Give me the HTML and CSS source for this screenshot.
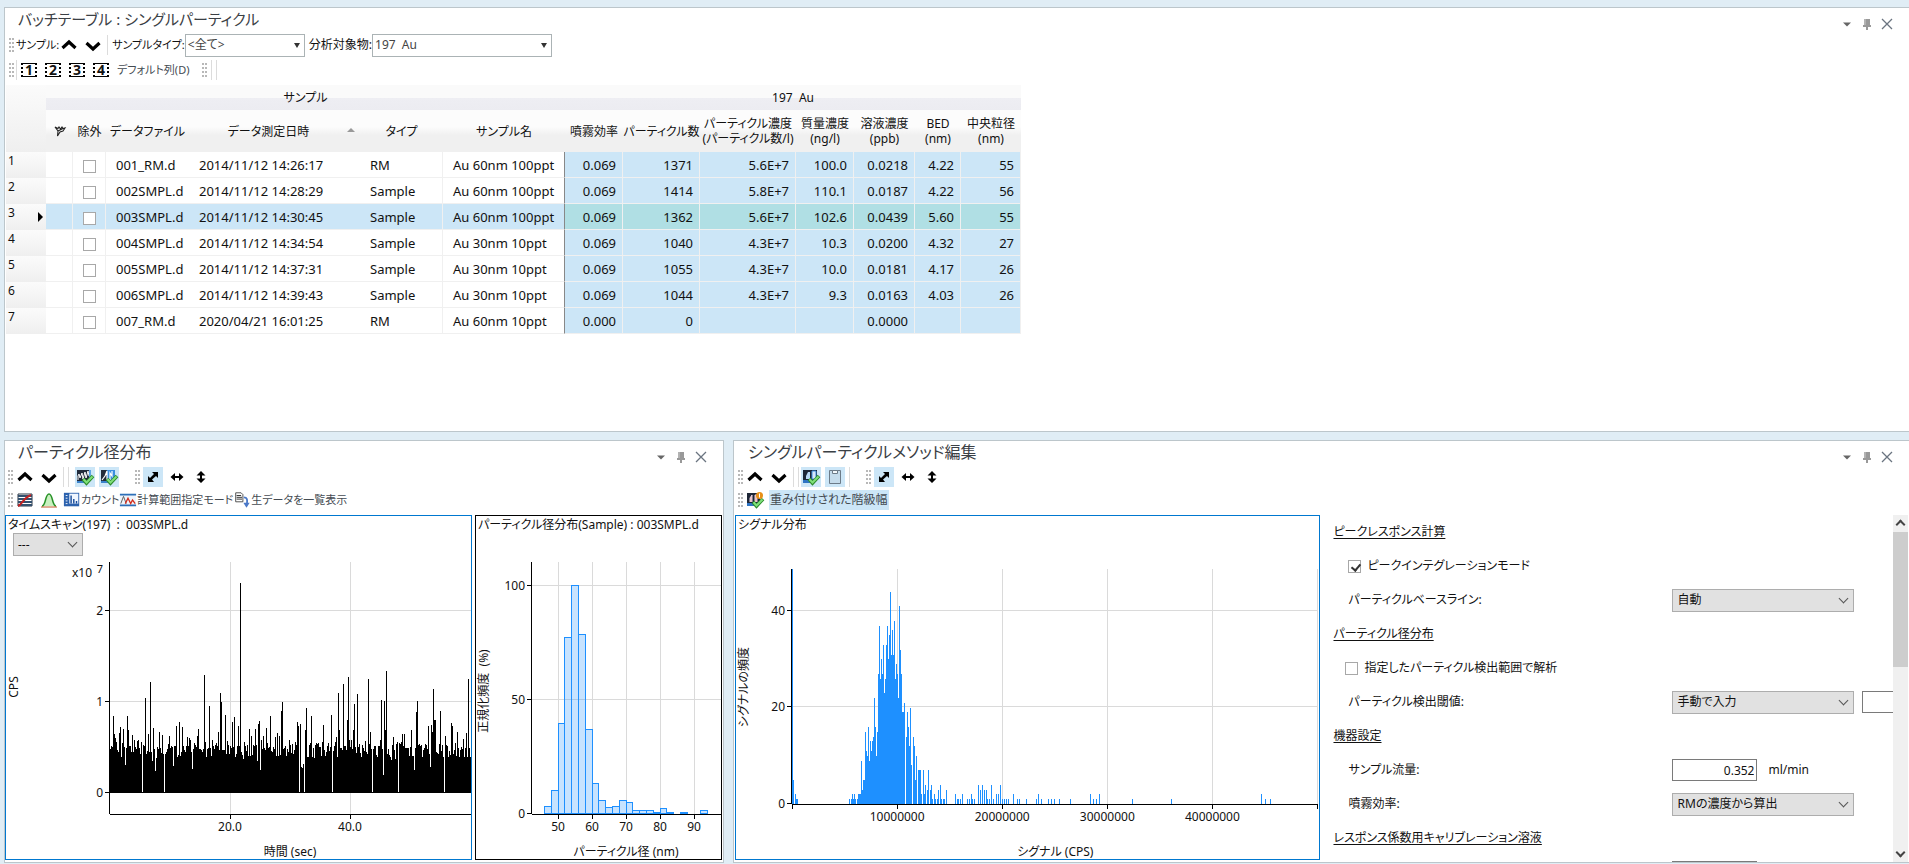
FILE: index.html
```html
<!DOCTYPE html>
<html lang="ja">
<head>
<meta charset="utf-8">
<title>シングルパーティクル</title>
<link rel="stylesheet" href="styles.css">
</head>
<body>
<svg class="sprite" aria-hidden="true">
  <symbol id="up" viewBox="0 0 20 20"><path d="M3.500 13L10 7l6.500 6" fill="none" stroke="#000" stroke-width="3.200"/></symbol>
  <symbol id="down" viewBox="0 0 20 20"><path d="M3.500 8l6.500 6L16.500 8" fill="none" stroke="#000" stroke-width="3.200"/></symbol>
  <symbol id="caret" viewBox="0 0 20 20"><path d="M6 8.500h8l-4 4z" fill="#666"/></symbol>
  <symbol id="pin" viewBox="0 0 20 20"><path d="M7 5h6v6h1v2H6v-2h1zM9 13h2v3H9z" fill="#999"/><path d="M8 5v6" stroke="#ccc"/></symbol>
  <symbol id="close" viewBox="0 0 20 20"><path d="M5 5l10 10M15 5L5 15" stroke="#6a7480" stroke-width="1.300"/></symbol>
  <symbol id="diag" viewBox="0 0 20 20"><path d="M9 5h6v6l-2-2-4 3.500 2 2.500H5V9l2 2 4-4z" fill="#000"/></symbol>
  <symbol id="horiz" viewBox="0 0 20 20"><path d="M3.500 10l4.500-4v3h4V6l4.500 4-4.500 4v-3H8v3z" fill="#000"/></symbol>
  <symbol id="vert" viewBox="0 0 20 20"><path d="M10 4l4.500 4.500H11v3h3.500L10 16l-4.500-4.500H9v-3H5.500z" fill="#000"/></symbol>
  <symbol id="check" viewBox="0 0 20 20"><path d="M8 12l3.500 4L18 9" fill="none" stroke="#2c8a2c" stroke-width="3.600"/><path d="M8.500 12.300l3 3.200L17.500 9.500" fill="none" stroke="#7fe07a" stroke-width="2"/></symbol>
  <symbol id="scan" viewBox="0 0 20 20"><path d="M2 3h14v11H2z" fill="#222c3c"/><path d="M2 14h9v2H2z" fill="#3c84cc"/><path d="M3 13V9l1-2 1 4 2-5 1 6 2-7 1 6 2-7 1 5" fill="none" stroke="#fff"/><path d="M14 3h2v11h-2z" fill="#5fa5e2"/><use href="#check"/></symbol>
  <symbol id="scan2" viewBox="0 0 20 20"><path d="M2 3h14v11H2z" fill="#222c3c"/><path d="M8 3h8v11H8z" fill="#3b8fe0"/><path d="M2 14h9v2H2z" fill="#3c84cc"/><path d="M3 13l3-4 2-5v9M11 13V6l2 3V4" fill="none" stroke="#fff" stroke-width="1.200"/><use href="#check"/></symbol>
  <symbol id="signal" viewBox="0 0 20 20"><path d="M2 3h14v11H2z" fill="#1d2636"/><path d="M2 13h9v3H2z" fill="#2e74c4"/><path d="M11 4h4v8h-4z" fill="#d9e8f8" stroke="#3b8fe0"/><path d="M5 12V9l2-4h2v7" fill="#b9d8f4"/><use href="#check"/></symbol>
  <symbol id="signal2" viewBox="0 0 20 20"><path d="M2 3h13v11H2z" fill="#1d2636"/><path d="M2 13h9v3H2z" fill="#2e74c4"/><path d="M5 12V8l2-3v7M10 12V5h2v7" fill="#f3b8ae" stroke="#e8d0e0"/><use href="#check"/><circle cx="14.500" cy="5.500" r="3.500" fill="#e89018"/><path d="M14.500 3.500v4" stroke="#fff"/></symbol>
  <symbol id="sheet" viewBox="0 0 20 20"><path d="M4.500 3.500h11v13h-11z" fill="#c5dcec" stroke="#6c7b88"/><path d="M7.500 3.500h5v3h-5z" fill="#f4f9fc" stroke="#6c7b88"/></symbol>
  <symbol id="calib" viewBox="0 0 20 20"><path d="M3 4h14v12H3z" fill="#fff" stroke="#2d3745"/><path d="M3 6h14M3 9h14M3 12h14M3 15h14" stroke="#33506e" stroke-width="2"/><path d="M3 16c4-1 5-8 13-11" fill="none" stroke="#c32020" stroke-width="2"/></symbol>
  <symbol id="peak" viewBox="0 0 20 20"><path d="M3 16c4 0 3-12 7-12s3 12 7 12" fill="#c9f0bf" stroke="#279227" stroke-width="1.500"/><path d="M2 17h16" stroke="#c05828"/></symbol>
  <symbol id="count" viewBox="0 0 20 20"><path d="M1 2h17v15H1z" fill="#2c62ae"/><path d="M7 3h10v11H7z" fill="#f0f6ff"/><path d="M9 14V5M12 14V9M15 14v-3" stroke="#174b9a" stroke-width="1.600"/><path d="M3 5h2M3 8h2M3 11h2M3 14h2" stroke="#fff"/></symbol>
  <symbol id="range" viewBox="0 0 20 20"><path d="M1 3h18v14H1z" fill="#eef4fb"/><path d="M1 4h18M1 16h18" stroke="#2d6fb8" stroke-width="2"/><path d="M2 14l3-8 3 8" fill="none" stroke="#555"/><path d="M7 14l3-6 3 6 2-4 3 4" fill="none" stroke="#d32b1a" stroke-width="1.400"/></symbol>
  <symbol id="export" viewBox="0 0 20 20"><path d="M3 2h6l2 2v8H3z" fill="#fff" stroke="#444"/><path d="M4 5h5M4 7h6M4 9h6" stroke="#222"/><path d="M12 7c4 0 4 3 3.500 7" fill="none" stroke="#4a78c8" stroke-width="2"/><path d="M11.500 13h7L15 18.500z" fill="#4a78c8"/></symbol>
  <symbol id="flag" viewBox="0 0 14 14"><path d="M2 3l3 4-.5 5L7 8l3-1 2-3-2 .5L9 3 7.500 5 6 3 5 4.500zM5 7l5-2.500" fill="none" stroke="#222" stroke-width="1.100"/></symbol>
</svg>

<section class="panel batch">
  <header class="panel-head">
    <h1>バッチテーブル : シングルパーティクル</h1>
    <div class="window-tools"><button aria-label="メニュー"><svg><use href="#caret"/></svg></button><button aria-label="固定"><svg><use href="#pin"/></svg></button><button aria-label="閉じる"><svg><use href="#close"/></svg></button></div>
  </header>
  <div class="bar">
    <i class="grip"></i><span>サンプル:</span>
    <button class="tool" aria-label="前のサンプル"><svg><use href="#up"/></svg></button>
    <button class="tool" aria-label="次のサンプル"><svg><use href="#down"/></svg></button>
    <i class="rule"></i>
    <label for="stype">サンプルタイプ:</label>
    <span class="flat stype"><select id="stype"><option>&lt;全て&gt;</option></select></span>
    <label class="wide" for="analyte">分析対象物:</label>
    <span class="flat analyte"><select id="analyte"><option>197&nbsp; Au</option></select></span>
  </div>
  <div class="bar bar-columns">
    <i class="grip"></i><i class="rule"></i>
    <button class="num">1</button><button class="num">2</button><button class="num">3</button><button class="num">4</button>
    <button class="text">デフォルト列(D)</button>
    <i class="grip far"></i><i class="rule"></i><i class="rule"></i>
  </div>
  <table>
    <colgroup><col class="w-row"><col class="w-flag"><col class="w-ex"><col class="w-file"><col class="w-date"><col class="w-type"><col class="w-name"><col class="w-eff"><col class="w-num"><col class="w-pc"><col class="w-mass"><col class="w-sol"><col class="w-bed"><col class="w-size"></colgroup>
    <thead>
      <tr class="group"><th rowspan="2"></th><th colspan="6">サンプル</th><th colspan="7">197&nbsp; Au</th></tr>
      <tr class="cols"><th><svg class="flag" role="img" aria-label="フラグ"><use href="#flag"/></svg></th><th>除外</th><th>データファイル</th><th class="sorted">データ測定日時</th><th>タイプ</th><th>サンプル名</th><th>噴霧効率</th><th>パーティクル数</th><th>パーティクル濃度<br>(パーティクル数/l)</th><th>質量濃度<br>(ng/l)</th><th>溶液濃度<br>(ppb)</th><th>BED<br>(nm)</th><th>中央粒径<br>(nm)</th></tr>
    </thead>
    <tbody id="rows"></tbody>
  </table>
</section>

<main class="lower">
  <section class="panel">
    <header class="panel-head">
      <h2>パーティクル径分布</h2>
      <div class="window-tools"><button aria-label="メニュー"><svg><use href="#caret"/></svg></button><button aria-label="固定"><svg><use href="#pin"/></svg></button><button aria-label="閉じる"><svg><use href="#close"/></svg></button></div>
    </header>
    <div class="bar tools">
      <i class="grip"></i>
      <button class="tool" aria-label="上へ"><svg><use href="#up"/></svg></button>
      <button class="tool" aria-label="下へ"><svg><use href="#down"/></svg></button>
      <i class="rule"></i><i class="rule"></i>
      <button class="tool on" aria-label="タイムスキャン"><svg><use href="#scan"/></svg></button>
      <button class="tool on" aria-label="径分布"><svg><use href="#scan2"/></svg></button>
      <i class="grip near"></i>
      <button class="tool on" aria-label="両方向"><svg><use href="#diag"/></svg></button>
      <button class="tool" aria-label="横方向"><svg><use href="#horiz"/></svg></button>
      <button class="tool" aria-label="縦方向"><svg><use href="#vert"/></svg></button>
    </div>
    <div class="bar tools second">
      <i class="grip"></i>
      <button class="tool" aria-label="検量線"><svg><use href="#calib"/></svg></button>
      <button class="tool" aria-label="ピーク"><svg><use href="#peak"/></svg></button>
      <button class="text"><svg><use href="#count"/></svg>カウント</button>
      <button class="text"><svg><use href="#range"/></svg>計算範囲指定モード</button>
      <button class="text"><svg><use href="#export"/></svg>生データを一覧表示</button>
    </div>
    <div class="charts">
      <figure class="chart active">
        <figcaption>タイムスキャン(197)&nbsp; :&nbsp; 003SMPL.d</figcaption>
        <span class="combo small"><select aria-label="表示対象"><option>---</option></select></span>
        <svg viewBox="6 556 465 302" id="scan-chart" preserveAspectRatio="xMinYMin">
          <path class="grid" d="M230.500 562v252M350.500 562v252M110 610.500h361M110 701.500h361"/>
          <path class="bars-black" id="scan-bars"/>
          <path class="axis" d="M109.500 562v252M110 814.500h361M105 610.500h4M105 701.500h4M105 792.500h4M110 792.500h361M230.500 815v4M350.500 815v4"/>
          <g class="ticks end"><text x="92" y="577">x10</text><text x="103" y="573" class="exp">7</text><text x="103" y="615">2</text><text x="103" y="706">1</text><text x="103" y="797">0</text></g>
          <g class="ticks mid"><text x="230" y="831">20.0</text><text x="350" y="831">40.0</text><text x="290" y="856">時間&#160;(sec)</text><text transform="translate(18 687) rotate(-90)">CPS</text></g>
        </svg>
      </figure>
      <figure class="chart">
        <figcaption>パーティクル径分布(Sample) : 003SMPL.d</figcaption>
        <svg viewBox="476 533 245 325" preserveAspectRatio="xMinYMin">
          <path class="grid" d="M558.500 562v252M592.500 562v252M626.500 562v252M660.500 562v252M694.500 562v252M532 585.500h189M532 699.500h189"/>
          <g id="size-bars" class="size-bars"></g>
          <path class="axis" d="M531.500 562v252M532 814.500h189M527 585.500h4M527 699.500h4M527 813.500h4M558.500 815v4M592.500 815v4M626.500 815v4M660.500 815v4M694.500 815v4"/>
          <g class="ticks end"><text x="525" y="590">100</text><text x="525" y="704">50</text><text x="525" y="818">0</text></g>
          <g class="ticks mid"><text x="558" y="831">50</text><text x="592" y="831">60</text><text x="626" y="831">70</text><text x="660" y="831">80</text><text x="694" y="831">90</text><text x="626" y="856">パーティクル径&#160;(nm)</text><text transform="translate(488 691) rotate(-90)">正規化頻度&#160;&#160;(%)</text></g>
        </svg>
      </figure>
    </div>
  </section>

  <section class="panel method">
    <header class="panel-head">
      <h2>シングルパーティクルメソッド編集</h2>
      <div class="window-tools"><button aria-label="メニュー"><svg><use href="#caret"/></svg></button><button aria-label="固定"><svg><use href="#pin"/></svg></button><button aria-label="閉じる"><svg><use href="#close"/></svg></button></div>
    </header>
    <div class="bar tools">
      <i class="grip"></i>
      <button class="tool" aria-label="上へ"><svg><use href="#up"/></svg></button>
      <button class="tool" aria-label="下へ"><svg><use href="#down"/></svg></button>
      <i class="rule"></i><i class="rule"></i>
      <button class="tool on" aria-label="シグナル分布"><svg><use href="#signal"/></svg></button>
      <button class="tool on" aria-label="メソッド"><svg><use href="#sheet"/></svg></button>
      <i class="rule"></i><i class="grip near"></i>
      <button class="tool on" aria-label="両方向"><svg><use href="#diag"/></svg></button>
      <button class="tool" aria-label="横方向"><svg><use href="#horiz"/></svg></button>
      <button class="tool" aria-label="縦方向"><svg><use href="#vert"/></svg></button>
    </div>
    <div class="bar tools second">
      <i class="grip"></i>
      <button class="tool" aria-label="階級幅の設定"><svg><use href="#signal2"/></svg></button>
      <button class="text on">重み付けされた階級幅</button>
    </div>
    <div class="editor">
      <figure class="chart active">
        <figcaption>シグナル分布</figcaption>
        <svg viewBox="736 533 583 325" preserveAspectRatio="xMinYMin">
          <path class="grid" d="M897.500 569v235M1002.500 569v235M1107.500 569v235M1212.500 569v235M1317.500 569v235M793 610.500h525M793 706.500h525"/>
          <path class="bars-blue" id="signal-bars"/>
          <path class="axis" d="M791.500 569v235M792 804.500h526M787 610.500h4M787 706.500h4M787 803.500h4M792.500 805v4M897.500 805v4M1002.500 805v4M1107.500 805v4M1212.500 805v4M1317.500 805v4"/>
          <g class="ticks end"><text x="785" y="615">40</text><text x="785" y="711">20</text><text x="785" y="808">0</text></g>
          <g class="ticks mid"><text x="897" y="821">10000000</text><text x="1002" y="821">20000000</text><text x="1107" y="821">30000000</text><text x="1212" y="821">40000000</text><text x="1055" y="856">シグナル&#160;(CPS)</text><text transform="translate(748 687) rotate(-90)">シグナルの頻度</text></g>
        </svg>
      </figure>
      <div class="settings">
        <form>
          <h3>ピークレスポンス計算</h3>
          <div class="row"><label class="tick"><input type="checkbox" checked>ピークインテグレーションモード</label></div>
          <div class="row"><label for="base">パーティクルベースライン:</label><span class="combo"><select id="base"><option>自動</option></select></span></div>
          <h3>パーティクル径分布</h3>
          <div class="row outdent"><label class="tick"><input type="checkbox">指定したパーティクル検出範囲で解析</label></div>
          <div class="row"><label for="thr">パーティクル検出閾値:</label><span class="combo"><select id="thr"><option>手動で入力</option></select></span><input class="value" type="text" aria-label="検出閾値"></div>
          <h3>機器設定</h3>
          <div class="row"><label for="flow">サンプル流量:</label><input class="value" id="flow" type="text" value="0.352"><span class="unit">ml/min</span></div>
          <div class="row"><label for="neb">噴霧効率:</label><span class="combo"><select id="neb"><option>RMの濃度から算出</option></select></span></div>
          <h3>レスポンス係数用キャリブレーション溶液</h3>
          <div class="row"><span></span><input class="value" type="text" aria-label="溶液濃度"></div>
        </form>
        <div class="scroll"><button aria-label="上へスクロール" class="s-up"></button><div class="thumb"></div><button aria-label="下へスクロール" class="s-down"></button></div>
      </div>
    </div>
  </section>
</main>
<script src="app.js"></script>
</body>
</html>
```

FILE: styles.css
```css
* { box-sizing: border-box; }
body {
  margin: 0;
  height: 100vh;
  padding: 7px 0 1px 4px;
  display: flex;
  flex-direction: column;
  gap: 8px;
  overflow: hidden;
  background: #e0edf5;
  color: #111;
  font: 12px/16px "Noto Sans", "Noto Sans CJK JP", sans-serif;
  font-feature-settings: "palt";
}
button, select, input { font: inherit; font-feature-settings: inherit; color: inherit; }
button { border: 0; padding: 0; background: none; }
h1, h2, h3, figure { margin: 0; font-weight: 400; }
.sprite { position: absolute; width: 0; height: 0; }

.panel {
  flex: 1 1 0;
  min-width: 0;
  min-height: 0;
  display: flex;
  flex-direction: column;
  background: #fff;
  border: 1px solid #bcc6cb;
  overflow: hidden;
}
.batch { border-right: 0; }
.panel-head { display: flex; justify-content: space-between; height: 24px; padding-left: 13px; flex: none; }
.panel-head h1, .panel-head h2 { font-size: 16px; line-height: 22px; color: #3b4045; white-space: nowrap; }
.panel-head h1 { font-size: 15px; }
.window-tools { display: flex; align-items: center; padding: 8px 12px 0 0; }
.window-tools svg { width: 20px; height: 20px; display: block; }

.bar { display: flex; align-items: center; height: 26px; padding-left: 3px; flex: none; white-space: nowrap; font-size: 11px; }
.bar select, .wide { font-size: 12px; }
.grip {
  width: 6px;
  height: 14px;
  margin-right: 2px;
  background: conic-gradient(from 0deg at 1px 50%, #b8b8b8 25%, #fff 0) 0 0 / 3px 4px;
}
.rule { width: 1px; height: 20px; background: #dcdcdc; margin-right: 4px; }
.tool { width: 20px; height: 20px; margin-right: 4px; }
.tool svg { width: 20px; height: 20px; display: block; }
.text svg { width: 18px; height: 18px; display: block; }
.on { background: #cce6f7; }
.text { display: flex; align-items: center; height: 20px; color: #444b52; }
.flat { position: relative; height: 23px; margin: 0 4px 0 0; }
.flat select, .combo select { appearance: none; width: 100%; height: 100%; border: 1px solid #abb3b5; border-radius: 0; padding: 0 4px; outline: 0; }
.flat select { background: #fff; color: #444; padding: 0 2px; }
.flat::after { content: ""; position: absolute; right: 5px; top: 9px; border: 3px solid transparent; border-top: 5px solid #333; border-bottom: 0; }
.stype { width: 120px; }
.analyte { width: 180px; }
.bar-columns { height: 24px; }
.num {
  width: 16px;
  height: 14px;
  margin-right: 8px;
  border: 1px solid #000;
  border-left: 2px dotted #000;
  border-right: 2px dotted #000;
  font-size: 14px;
  line-height: 12px;
  font-weight: 700;
}
.num:last-of-type { margin-right: 4px; }
.far { margin: 0 4px 0 12px; }

table { width: 1015px; margin: 3px 0 0 1px; border-collapse: separate; border-spacing: 0; table-layout: fixed; }
th, td { padding: 0; font-weight: 400; white-space: nowrap; }
.w-row { width: 40px; } .w-flag { width: 27px; } .w-ex { width: 33px; } .w-file { width: 83px; }
.w-date { width: 171px; } .w-type { width: 83px; } .w-name { width: 122px; } .w-eff { width: 58px; }
.w-num { width: 77px; } .w-pc { width: 96px; } .w-mass { width: 58px; } .w-sol { width: 61px; }
.w-bed { width: 46px; } .w-size { width: 60px; }
.group th { height: 25px; background: linear-gradient(#fafafa 50%, #eeeef3 51%, #ececf1); }
.group th:first-child { background: linear-gradient(#fbfbfb, #efefef); }
.cols th { height: 42px; line-height: 15px; background: linear-gradient(#fcfcfc 40%, #f0f0f0 60%); }
.flag { width: 14px; height: 14px; display: block; margin: auto; }
.sorted { position: relative; padding-right: 12px; }
.sorted::after { content: ""; position: absolute; right: 5px; top: 18px; border: 4px solid transparent; border-bottom: 4px solid #999; border-top: 0; }
tbody th { position: relative; height: 26px; padding: 1px 0 0 2px; text-align: left; vertical-align: top; background: linear-gradient(#fbfbfb, #efefef); }
tbody td { height: 26px; font-size: 13px; padding: 0 0 0 10px; border-bottom: 1px solid #f0f0f0; color: #111; }
tbody td:nth-child(2), tbody td:nth-child(3), tbody td:nth-child(6) { border-right: 1px solid #f0f0f0; }
tbody td:nth-child(3) { padding: 0; text-align: center; }
tbody td:nth-child(7) { border-right: 1px solid #888; }
tbody td.v { text-align: right; padding: 0 6px 0 0; background: #cce6f7; border-right: 1px solid #f0f0f0; }
.current td { background: #cce6f7; }
.current td.v { background: #b0dfe4; }
.current th::after { content: ""; position: absolute; right: 3px; top: 8px; border: 5px solid transparent; border-left-color: #000; border-right: 0; }
input[type="checkbox"] { appearance: none; width: 13px; height: 13px; margin: 0; border: 1px solid #a8a8a8; background: #fff; vertical-align: middle; }

.lower { flex: 1 1 0; min-height: 0; display: grid; grid-template-columns: 720fr 1176fr; gap: 9px; }
.method { border-right: 0; padding-left: 1px; }
.lower .bar { height: 24px; padding-left: 2px; }
.lower .bar.second { height: 22px; margin-bottom: 4px; }
.lower .rule + .rule { margin-right: 6px; }
.method .rule + .rule { margin-right: 2px; }
.near { margin: 0 3px 0 11px; }
.second .text.on { padding: 0 1px; font-size: 12px; }
.charts { flex: 1; min-height: 0; display: grid; grid-template-columns: 467fr 247fr; gap: 3px; padding: 0 1px 2px 0; }
.chart { min-width: 0; min-height: 0; display: flex; flex-direction: column; border: 1px solid #000; overflow: hidden; }
.chart.active { border-color: #0078d0; }
figcaption { height: 17px; line-height: 18px; padding-left: 2px; white-space: nowrap; flex: none; }
.chart > svg { flex: 1; min-height: 0; width: 100%; }
.combo { position: relative; display: block; width: 182px; height: 23px; }
.combo select { background: #e1e1e1; border-color: #adadad; }
.combo::after { content: ""; position: absolute; right: 7px; top: 6px; width: 6px; height: 6px; border: solid #555; border-width: 0 1px 1px 0; transform: rotate(45deg); }
.combo.small { width: 70px; margin-left: 7px; flex: none; }
.grid { stroke: #dadada; fill: none; shape-rendering: crispEdges; }
.axis { stroke: #000; fill: none; shape-rendering: crispEdges; }
.bars-black { stroke: #000; shape-rendering: crispEdges; }
.bars-blue { stroke: #1e90ff; shape-rendering: crispEdges; }
.size-bars { fill: #1e90ff; fill-opacity: .25; stroke: #1e90ff; shape-rendering: crispEdges; }
.ticks { font-size: 12px; fill: #111; }
.end { text-anchor: end; }
.mid { text-anchor: middle; }
.exp { font-size: 11px; }

.editor { flex: 1; min-height: 0; display: grid; grid-template-columns: 585fr 588fr; padding: 0; }
.editor .chart { margin-bottom: 2px; }
.settings { display: flex; min-height: 0; overflow: hidden; padding-right: 1px; }
form { flex: 1; min-width: 0; overflow: hidden; padding-left: 13px; }
form h3 { font-size: 12px; line-height: 34px; height: 34px; text-decoration: underline; text-underline-offset: 2px; }
.row { display: flex; align-items: center; height: 34px; padding-left: 15px; }
.row > label, .row > span:empty { flex: 0 0 324px; }
.outdent { padding-left: 12px; }
.tick { display: flex; align-items: center; gap: 6px; }
.tick input { position: relative; }
.tick input:checked::after { content: ""; position: absolute; left: 4px; top: 1px; width: 4px; height: 7px; border: solid #333; border-width: 0 2px 2px 0; transform: rotate(40deg); }
.row .combo { flex: none; }
.value { width: 85px; height: 22px; flex: none; border: 1px solid #7a7a7a; padding: 0 2px; text-align: right; }
.combo + .value { margin-left: 8px; }
.unit { padding-left: 11px; }
.scroll { width: 15px; background: #f0f0f0; display: flex; flex-direction: column; }
.scroll button { height: 17px; display: grid; place-items: center; }
.scroll button::before { content: ""; width: 5px; height: 5px; border: solid #444; border-width: 2px 0 0 2px; transform: translateY(1px) rotate(45deg); }
.scroll .s-down { margin-top: auto; }
.scroll .s-down::before { transform: translateY(-1px) rotate(225deg); }
.thumb { flex: 0 0 39%; background: #cdcdcd; }
```

FILE: app.js
```js
const samples = [
  ["001_RM.d", "2014/11/12 14:26:17", "RM", "Au 60nm 100ppt", "0.069", "1371", "5.6E+7", "100.0", "0.0218", "4.22", "55"],
  ["002SMPL.d", "2014/11/12 14:28:29", "Sample", "Au 60nm 100ppt", "0.069", "1414", "5.8E+7", "110.1", "0.0187", "4.22", "56"],
  ["003SMPL.d", "2014/11/12 14:30:45", "Sample", "Au 60nm 100ppt", "0.069", "1362", "5.6E+7", "102.6", "0.0439", "5.60", "55"],
  ["004SMPL.d", "2014/11/12 14:34:54", "Sample", "Au 30nm 10ppt", "0.069", "1040", "4.3E+7", "10.3", "0.0200", "4.32", "27"],
  ["005SMPL.d", "2014/11/12 14:37:31", "Sample", "Au 30nm 10ppt", "0.069", "1055", "4.3E+7", "10.0", "0.0181", "4.17", "26"],
  ["006SMPL.d", "2014/11/12 14:39:43", "Sample", "Au 30nm 10ppt", "0.069", "1044", "4.3E+7", "9.3", "0.0163", "4.03", "26"],
  ["007_RM.d", "2020/04/21 16:01:25", "RM", "Au 60nm 10ppt", "0.000", "0", "", "", "0.0000", "", ""]
];
document.getElementById("rows").innerHTML = samples.map((s, i) =>
  `<tr${i === 2 ? ' class="current"' : ""}><th scope="row">${i + 1}</th><td></td>` +
  `<td><input type="checkbox" aria-label="${s[0]} を除外"></td>` +
  s.map((v, j) => `<td${j > 3 ? ' class="v"' : ""}>${v}</td>`).join("") + "</tr>").join("");

// Time scan: one reading per plotted column, in 1e5 CPS. Named readings override the background.
const peaks = {
  0: 47, 3: 83, 4: 64, 5: 59, 9: 65, 10: 71, 13: 69, 17: 83, 18: 68, 22: 63, 35: 103, 38: 64, 40: 121, 43: 70, 49: 66, 52: 63,
  59: 62, 66: 72, 69: 77, 72: 71, 79: 59, 88: 69, 94: 129, 99: 95, 108: 66, 110: 109, 111: 99, 115: 85, 122: 77, 124: 82, 128: 73,
  130: 230, 139: 69, 141: 61, 145: 69, 148: 75, 149: 78, 153: 62, 156: 70, 160: 83, 167: 65, 169: 62, 171: 89, 172: 99, 187: 77,
  188: 73, 190: 75, 195: 68, 196: 92, 201: 84, 213: 74, 221: 85, 228: 109, 229: 68, 233: 119, 237: 79, 238: 126, 243: 68, 244: 97,
  247: 108, 258: 124, 260: 66, 271: 101, 274: 100, 275: 68, 276: 133, 292: 64, 294: 64, 301: 68, 306: 88, 307: 100, 318: 72,
  321: 74, 322: 66, 323: 113, 324: 79, 325: 79, 330: 89, 335: 61, 341: 76, 342: 72, 347: 66, 356: 65, 358: 124,
  15: 30, 45: 23, 63: 29, 82: 25, 150: 24, 191: 27, 192: 26, 193: 31, 273: 19, 304: 24, 320: 27,
  32: 0, 54: 0, 189: 0, 194: 0, 222: 0, 262: 0, 288: 0, 334: 0
};
let seed = 197;
const noise = () => (seed = (seed * 16807) % 2147483647) / 2147483647;
let d = "";
for (let i = 0; i < 361; i++) {
  const background = 34 + Math.floor((noise() + noise()) * 14);
  const value = i in peaks ? peaks[i] : background;
  d += `M${110.5 + i} 792v${-Math.round(value * 0.91)}`;
}
document.getElementById("scan-bars").setAttribute("d", d);

// Particle size histogram: 2 nm classes starting at 46 nm, in percent.
const sizes = [3, 10, 39.5, 77, 100, 78.5, 37, 13, 5.5, 2.5, 3, 5.5, 5, 1.5, 1.5, 1.5, 0.6, 2, 0.6, 0, 0.6, 0, 0, 1.5];
document.getElementById("size-bars").innerHTML = sizes.map((v, i) => {
  if (!v) return "";
  const left = Math.round(544 + i * 6.8) + 0.5, right = Math.round(544 + (i + 1) * 6.8) + 0.5;
  const height = Math.max(1, Math.round(v * 2.28));
  return `<rect x="${left}" y="${813.5 - height}" width="${right - left}" height="${height}"/>`;
}).join("");

// Signal histogram: position (270 steps per 10,000,000 CPS) and count.
const signals = [
  1, 49, 3, 5, 8, 2, 11, 1, 13, 1, 147, 1, 152, 1, 155, 2, 157, 1, 160, 2, 162, 1, 167, 1, 170, 2, 173, 2, 175, 2, 178, 9, 180, 3,
  183, 5, 185, 5, 188, 15, 191, 11, 193, 10, 196, 16, 198, 9, 201, 13, 204, 11, 206, 13, 209, 14, 211, 22, 214, 16, 216, 10,
  219, 15, 221, 27, 224, 37, 227, 26, 229, 30, 232, 27, 234, 33, 237, 23, 239, 26, 242, 33, 245, 37, 247, 30, 250, 35, 252, 44,
  255, 31, 257, 36, 260, 31, 262, 38, 265, 26, 268, 29, 270, 27, 273, 22, 275, 41, 278, 32, 280, 27, 283, 19, 286, 19, 288, 21,
  293, 14, 296, 19, 299, 16, 301, 12, 304, 20, 306, 8, 311, 14, 314, 12, 316, 5, 319, 10, 324, 7, 327, 7, 329, 7, 332, 2,
  337, 7, 340, 2, 343, 4, 347, 3, 350, 7, 355, 3, 358, 4, 361, 1, 365, 2, 368, 1, 373, 1, 376, 3, 381, 4, 384, 1, 388, 1, 391, 1,
  396, 3, 419, 2, 424, 1, 427, 1, 432, 1, 437, 2, 450, 1, 455, 1, 460, 2, 463, 1, 468, 1, 478, 4, 483, 3, 489, 4, 494, 3, 499, 3,
  502, 1, 507, 1, 512, 4, 517, 1, 525, 2, 530, 2, 535, 4, 540, 1, 545, 1, 550, 1, 555, 1, 568, 2, 579, 1, 584, 1, 601, 1, 627, 1,
  633, 2, 640, 1, 658, 1, 666, 1, 674, 1, 687, 1, 715, 1, 766, 2, 774, 1, 782, 1, 789, 2, 874, 1, 974, 1, 1206, 2, 1216, 1, 1229, 1
];
let s = "";
for (let i = 0; i < signals.length; i += 2) {
  const x = 792.5 + Math.round((signals[i] - 0.3) * 105 / 270);
  s += `M${x} 804v${-Math.min(235, Math.round(signals[i + 1] * 4.82))}`;
}
document.getElementById("signal-bars").setAttribute("d", s);
```
